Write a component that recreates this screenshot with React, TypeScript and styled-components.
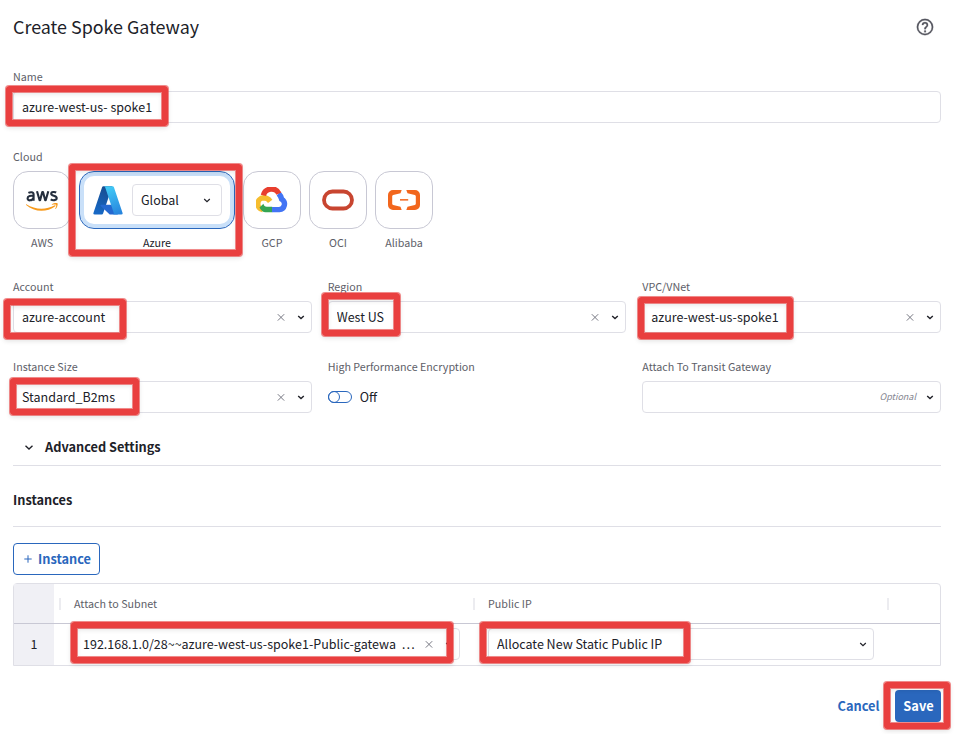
import React from "react";
import styled, { createGlobalStyle, css } from "styled-components";

const color = {
  text: "#202128",
  muted: "#5d5e68",
  border: "#dfdfe6",
  borderStrong: "#c8c8d4",
  blue: "#2a67bd",
  red: "#e93f3f",
};

const GlobalStyle = createGlobalStyle`
  *, *::before, *::after { box-sizing: border-box; }
  body {
    margin: 0;
    background: #fff;
    color: ${color.text};
    font-family: "Noto Sans CJK SC", "Noto Sans", sans-serif;
    font-size: 12.5px;
    line-height: 20px;
  }
  button { font-family: inherit; }
`;

const Page = styled.main`
  position: relative;
  display: flex;
  flex-direction: column;
  width: 955px;
  height: 734px;
  padding: 12px 14px 0 13px;
  overflow: hidden;
`;

const Header = styled.header`
  display: flex;
  align-items: center;
  justify-content: space-between;
  height: 30px;
  padding-right: 7px;
`;

const Title = styled.h1`
  margin: 0;
  padding-bottom: 2px;
  font-size: 17.9px;
  font-weight: 400;
  line-height: 28px;
`;

const Label = styled.label`
  display: block;
  height: 20px;
  margin-bottom: 4px;
  color: ${color.muted};
  font-size: 10.72px;
  line-height: 20px;
  white-space: nowrap;
`;

const NameField = styled.div`
  margin-top: 25px;
`;

const Control = styled.div`
  display: flex;
  align-items: center;
  height: 32px;
  padding: 0 6px 0 8px;
  border: 1px solid ${color.border};
  border-radius: 4px;
  background: #fff;
  white-space: nowrap;
`;

const Value = styled.span`
  flex: 1;
  min-width: 0;
  overflow: hidden;
`;

const Actions = styled.span`
  display: flex;
  align-items: center;
  gap: 12px;
`;

const Optional = styled.span`
  color: #858690;
  font-size: 9px;
  font-style: italic;
  margin-right: -2px;
`;

const CloudField = styled.div`
  margin-top: 24px;
`;

const CloudList = styled.div`
  display: flex;
  gap: 8px;
`;

const CloudOption = styled.div<{ $selected?: boolean }>`
  display: flex;
  flex-direction: column;
  align-items: center;
  width: ${(p) => (p.$selected ? 156 : 58)}px;
  color: ${(p) => (p.$selected ? color.text : color.muted)};
  font-size: 10.72px;
  line-height: 20px;
`;

const CloudTile = styled.div<{ $selected?: boolean }>`
  display: flex;
  align-items: center;
  justify-content: center;
  width: 58px;
  height: 58px;
  margin-bottom: 4px;
  border: 1px solid ${color.borderStrong};
  border-radius: 15px;
  ${(p) =>
    p.$selected &&
    css`
      justify-content: flex-start;
      width: 156px;
      padding-left: 13px;
      border-color: ${color.blue};
      box-shadow: inset 0 0 0 4px #c9e0f9;
    `}
`;

const MiniSelect = styled.div`
  display: flex;
  align-items: center;
  justify-content: space-between;
  width: 90px;
  height: 32px;
  margin-left: 9px;
  padding: 0 10px 0 8px;
  border: 1px solid ${color.border};
  border-radius: 4px;
  font-size: 12.5px;
`;

const FieldGrid = styled.div`
  display: grid;
  grid-template-columns: repeat(3, 1fr);
  column-gap: 16px;
  row-gap: 24px;
  margin-top: 24px;
`;

const SwitchRow = styled.div`
  display: flex;
  align-items: center;
  gap: 8px;
  height: 32px;
`;

const SwitchTrack = styled.span`
  display: flex;
  align-items: center;
  width: 24px;
  height: 12px;
  border: 1px solid ${color.blue};
  border-radius: 6px;
`;

const SwitchKnob = styled.span`
  width: 12px;
  height: 12px;
  margin-left: -1px;
  border: 1px solid ${color.blue};
  border-radius: 50%;
`;

const AdvancedHeader = styled.div`
  display: flex;
  align-items: center;
  gap: 11px;
  height: 37px;
  margin-top: 16px;
  padding-left: 11px;
  border-bottom: 1px solid ${color.border};
  font-size: 12.75px;
  font-weight: 700;
`;

const SectionHeader = styled.h2`
  height: 61px;
  margin: 0;
  padding-top: 24px;
  border-bottom: 1px solid ${color.border};
  font-size: 12.75px;
  font-weight: 700;
  line-height: 20px;
`;

const AddButton = styled.button`
  display: flex;
  align-items: center;
  align-self: flex-start;
  gap: 6px;
  width: 87px;
  height: 32px;
  margin-top: 16px;
  padding: 0 0 0 10px;
  border: 1px solid ${color.blue};
  border-radius: 4px;
  background: #fff;
  color: ${color.blue};
  font-size: 12.75px;
  font-weight: 700;
`;

const ButtonText = styled.span`
  padding-bottom: 2px;
  line-height: normal;
`;

const Table = styled.div`
  margin-top: 8px;
  border: 1px solid ${color.border};
  border-radius: 4px 4px 0 0;
`;

const TableRow = styled.div<{ $head?: boolean }>`
  display: grid;
  grid-template-columns: 40px 414px 414px 1fr;
  height: ${(p) => (p.$head ? 40 : 41)}px;
  ${(p) =>
    p.$head &&
    css`
      border-bottom: 1px solid ${color.borderStrong};
      color: ${color.muted};
      font-size: 10.72px;
    `}
`;

const IndexCell = styled.div`
  display: flex;
  align-items: center;
  justify-content: center;
  padding-bottom: 1px;
  background: #f0f0f5;
`;

const HeadCell = styled.div`
  display: flex;
  align-items: center;
  gap: 13px;
  padding-left: 5px;
  &::before {
    content: "";
    width: 2px;
    height: 12px;
    background: #ececf0;
  }
`;

const BodyCell = styled.div`
  padding: 4px 8px 0 20px;
`;

const Footer = styled.footer`
  display: flex;
  justify-content: flex-end;
  align-items: center;
  gap: 15.5px;
  height: 32px;
  margin-top: 24px;
`;

const CancelButton = styled.button`
  height: 32px;
  padding: 0 0 2px;
  border: 0;
  background: none;
  color: ${color.blue};
  font-size: 12.8px;
  font-weight: 700;
`;

const SaveButton = styled.button`
  width: 46px;
  height: 32px;
  padding: 0 0 2px 1px;
  border: 0;
  border-radius: 4px;
  background: ${color.blue};
  color: #fff;
  font-size: 12.8px;
  font-weight: 700;
`;

const Callout = styled.div<{ $x: number; $y: number; $w: number; $h: number }>`
  position: absolute;
  left: ${(p) => p.$x}px;
  top: ${(p) => p.$y}px;
  width: ${(p) => p.$w}px;
  height: ${(p) => p.$h}px;
  border: 6px solid ${color.red};
  border-radius: 3px;
  box-shadow:
    0 0 0 1px rgba(233, 63, 63, 0.6),
    inset 0 0 0 1px rgba(233, 63, 63, 0.6),
    0 2px 5px rgba(0, 0, 0, 0.12),
    inset 0 2px 5px rgba(0, 0, 0, 0.1);
  pointer-events: none;
`;

const Chevron = ({ size = 8, stroke = 1.4 }: { size?: number; stroke?: number }) => (
  <svg width={size} height={size} viewBox="0 0 8 8" fill="none">
    <path d="M1.2 3 4 5.6l2.8-2.6" stroke={color.text} strokeWidth={stroke} />
  </svg>
);

const Cross = () => (
  <svg width="8" height="8" viewBox="0 0 8 8" fill="none">
    <path d="M.8 1.200l6.400 6.400M7.200 1.200L.8 7.600" stroke="#777883" strokeWidth="1" />
  </svg>
);

const Plus = () => (
  <svg width="8" height="8" viewBox="0 0 8 8" fill="none">
    <path d="M4 .3v7.400M.3 4h7.400" stroke={color.blue} strokeWidth="1" />
  </svg>
);

const Help = () => (
  <svg width="18" height="18" viewBox="0 0 24 24" fill="#55565f" stroke="#55565f" strokeWidth="0.3">
    <path d="M11 19h2.2v-2.2H11V19zM12 1a11 11 0 1 0 0 22 11 11 0 0 0 0-22zm0 20a9 9 0 1 1 0-18 9 9 0 0 1 0 18zm0-15.8a4.2 4.2 0 0 0-4.2 4.2h2.1a2.1 2.1 0 1 1 4.2 0c0 2.1-3.1 1.9-3.1 5.5h2.2c0-2.4 3-2.7 3-5.5A4.2 4.2 0 0 0 12 5.2z" />
  </svg>
);

const AwsLogo = () => (
  <svg width="32" height="21" viewBox="0 0 32 21">
    <g fill="none" stroke="#252f3e" strokeWidth="2.1" strokeLinejoin="round">
      <path d="M2.400 2.900C3.700 2.200 7.600 1.400 7.600 4.400v6.400M7.500 6c-2.500-.7-5.900-.3-5.900 2.200 0 3 4.600 2.800 5.900-.4" />
      <path d="M11 1.200l2.600 9.100h.5L16.300 2h.7l2.200 8.300h.5l2.600-9.100" />
      <path d="M30.200 2.500c-1.400-.8-5-.9-5 1.200 0 2.500 5.500 1.400 5.500 4.300 0 2.700-4.200 2.600-6 1.400" />
    </g>
    <path d="M.3 14.200c9 5.700 19.600 5.800 28.500 1.100.6-.3 1.100.4.5.9-8.300 6.300-20.900 6.300-29.200-1.200-.5-.4-.2-1 .2-.8z" fill="#f79a1c" />
    <path d="M25.800 14.200c1.400-1.100 5.300-1.500 5.800-.8.4.6-.3 4-1.800 5.500-.4.3-.7.1-.5-.3.5-1.100 1.200-3.100.9-3.700-.5-.5-2.800-.3-4-.2-.4 0-.7-.2-.4-.5z" fill="#f79a1c" />
  </svg>
);

const AzureLogo = () => (
  <svg width="30" height="29" viewBox="0 0 96 93">
    <defs>
      <linearGradient id="azLeft" x1="58.9" y1="7" x2="24" y2="90" gradientUnits="userSpaceOnUse">
        <stop stopColor="#174b8e" />
        <stop offset="1" stopColor="#1768c5" />
      </linearGradient>
      <linearGradient id="azRight" x1="48" y1="5" x2="84" y2="90" gradientUnits="userSpaceOnUse">
        <stop stopColor="#41c9f6" />
        <stop offset="1" stopColor="#2784dd" />
      </linearGradient>
    </defs>
    <path d="M33.300 1h28.500L32.300 88.400a4.500 4.500 0 0 1-4.300 3.100H5.800a4.500 4.500 0 0 1-4.300-6L29 4.100A4.500 4.500 0 0 1 33.300 1z" fill="url(#azLeft)" />
    <path d="M71 60H26c-2 0-3 2.500-1.500 4l29 27h26z" fill="#2468d0" />
    <path d="M67 4.100A4.500 4.500 0 0 0 62.700 1H34.500c2 0 3.700 1.200 4.300 3.100l27.500 81.400a4.500 4.500 0 0 1-4.300 6h28.200a4.500 4.500 0 0 0 4.300-6z" fill="url(#azRight)" />
  </svg>
);

const GcpLogo = () => (
  <svg width="32" height="26" viewBox="0 0 32 26" fill="none" strokeWidth="5.4">
    <path d="M6.800 22.700A6 6 0 0 1 7.500 10.800c2.800 0 5 1.200 6.700 3.500" stroke="#f6bd2e" />
    <path d="M3.500 20.400 7.400 16.800c.5 1.800 1.500 2.900 3.300 2.900h5.500v5.600H9.500c-2.300 0-4.500-1.800-6-4.900z" fill="#35a552" />
    <path d="M16 22.600h7.300a5.600 5.600 0 0 0 2.400-10.400c-.7-2.500-1.600-4.200-3.100-5.700" stroke="#4274f4" />
    <path d="M7.400 8.400A8.300 8.300 0 0 1 22.900 6.600" stroke="#e83e2e" />
  </svg>
);

const OciLogo = () => (
  <svg width="32" height="22" viewBox="0 0 32 22" fill="none">
    <rect x="2" y="2.500" width="28" height="17" rx="8.500" stroke="#c84530" strokeWidth="3.800" />
  </svg>
);

const AlibabaLogo = () => (
  <svg width="32" height="21" viewBox="0 0 32 21" fill="#f2661d">
    <path d="M13.700 0 12.500 3.300 5.200 5.100C4.500 5.300 4.200 5.700 4.200 6.300v7.400c0 .6.300 1 1 1.200l7.300 1.800 1.200 3.300H5a5 5 0 0 1-5-5V5a5 5 0 0 1 5-5zM18.300 0l1.200 3.300 7.300 1.800c.7.200 1 .6 1 1.200v7.400c0 .6-.3 1-1 1.200l-7.300 1.800-1.200 3.300H27a5 5 0 0 0 5-5V5a5 5 0 0 0-5-5z" />
    <path d="M12 9.100h8.200v1.500H12z" />
  </svg>
);

const Select = ({ label, value, optional }: { label: string; value?: string; optional?: boolean }) => (
  <div>
    <Label>{label}</Label>
    <Control>
      <Value>{value}</Value>
      <Actions>
        {optional ? <Optional>Optional</Optional> : <Cross />}
        <Chevron />
      </Actions>
    </Control>
  </div>
);

const clouds = [
  { name: "GCP", Logo: GcpLogo },
  { name: "OCI", Logo: OciLogo },
  { name: "Alibaba", Logo: AlibabaLogo },
];

const callouts: [number, number, number, number][] = [
  [6, 86, 162, 40],
  [69, 164, 173, 92],
  [4, 299, 122, 40],
  [322, 293, 78, 43],
  [638, 297, 155, 42],
  [10, 378, 129, 37],
  [71, 622, 382, 41],
  [480, 622, 210, 41],
  [884, 682, 66, 47],
];

export default function App() {
  return (
    <Page>
      <GlobalStyle />
      <Header>
        <Title>Create Spoke Gateway</Title>
        <Help />
      </Header>

      <NameField>
        <Label>Name</Label>
        <Control>
          <Value>azure-west-us- spoke1</Value>
        </Control>
      </NameField>

      <CloudField>
        <Label>Cloud</Label>
        <CloudList>
          <CloudOption>
            <CloudTile>
              <AwsLogo />
            </CloudTile>
            AWS
          </CloudOption>
          <CloudOption $selected>
            <CloudTile $selected>
              <AzureLogo />
              <MiniSelect>
                Global
                <Chevron stroke={1.2} />
              </MiniSelect>
            </CloudTile>
            Azure
          </CloudOption>
          {clouds.map(({ name, Logo }) => (
            <CloudOption key={name}>
              <CloudTile>
                <Logo />
              </CloudTile>
              {name}
            </CloudOption>
          ))}
        </CloudList>
      </CloudField>

      <FieldGrid>
        <Select label="Account" value="azure-account" />
        <Select label="Region" value="West US" />
        <Select label="VPC/VNet" value="azure-west-us-spoke1" />
        <Select label="Instance Size" value="Standard_B2ms" />
        <div>
          <Label>High Performance Encryption</Label>
          <SwitchRow>
            <SwitchTrack>
              <SwitchKnob />
            </SwitchTrack>
            Off
          </SwitchRow>
        </div>
        <Select label="Attach To Transit Gateway" optional />
      </FieldGrid>

      <AdvancedHeader>
        <Chevron size={10} stroke={1.1} />
        Advanced Settings
      </AdvancedHeader>
      <SectionHeader>Instances</SectionHeader>

      <AddButton>
        <Plus />
        <ButtonText>Instance</ButtonText>
      </AddButton>

      <Table>
        <TableRow $head>
          <IndexCell />
          <HeadCell>Attach to Subnet</HeadCell>
          <HeadCell>Public IP</HeadCell>
          <HeadCell />
        </TableRow>
        <TableRow>
          <IndexCell>1</IndexCell>
          <BodyCell>
            <Control>
              <Value>192.168.1.0/28~~azure-west-us-spoke1-Public-gatewa&nbsp; …</Value>
              <Actions>
                <Cross />
                <Chevron />
              </Actions>
            </Control>
          </BodyCell>
          <BodyCell>
            <Control>
              <Value>Allocate New Static Public IP</Value>
              <Chevron stroke={1.2} />
            </Control>
          </BodyCell>
          <div />
        </TableRow>
      </Table>

      <Footer>
        <CancelButton>Cancel</CancelButton>
        <SaveButton>Save</SaveButton>
      </Footer>

      {callouts.map(([x, y, w, h]) => (
        <Callout key={`${x}-${y}`} $x={x} $y={y} $w={w} $h={h} />
      ))}
    </Page>
  );
}
